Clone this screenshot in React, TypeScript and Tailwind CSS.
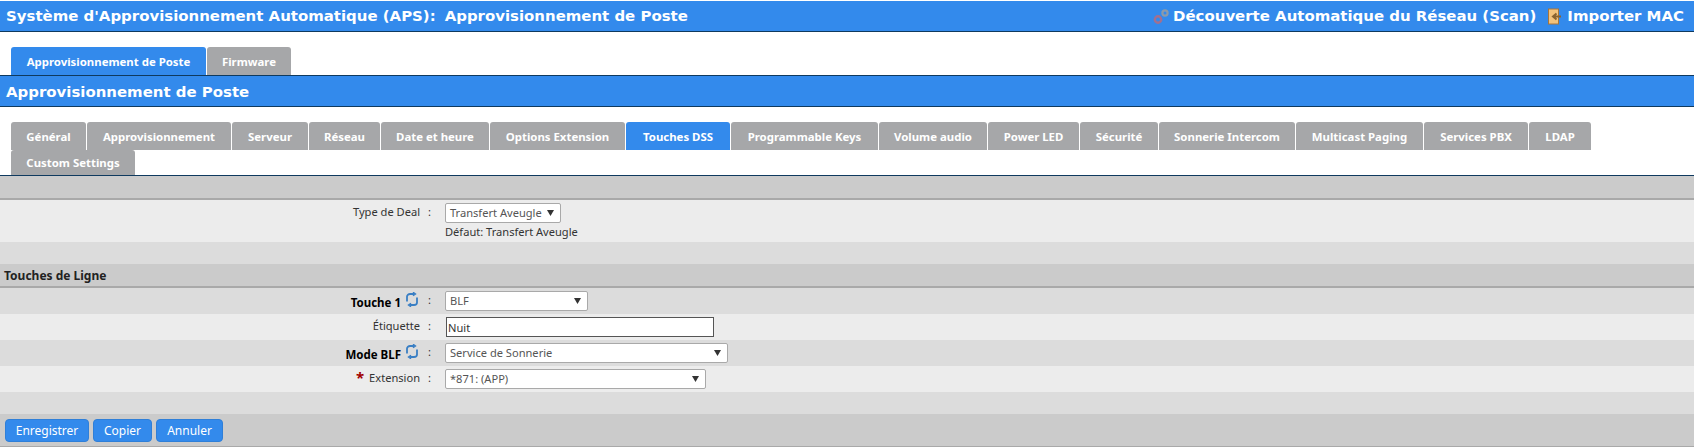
import React from 'react';

const mainTabs = [
  { label: 'Général', width: 'w-[75px]' },
  { label: 'Approvisionnement', width: 'w-[144px]' },
  { label: 'Serveur', width: 'w-[76px]' },
  { label: 'Réseau', width: 'w-[71px]' },
  { label: 'Date et heure', width: 'w-[108px]' },
  { label: 'Options Extension', width: 'w-[135px]' },
  { label: 'Touches DSS', width: 'w-[104px]', active: true },
  { label: 'Programmable Keys', width: 'w-[147px]' },
  { label: 'Volume audio', width: 'w-[108px]' },
  { label: 'Power LED', width: 'w-[91px]' },
  { label: 'Sécurité', width: 'w-[78px]' },
  { label: 'Sonnerie Intercom', width: 'w-[136px]' },
  { label: 'Multicast Paging', width: 'w-[127px]' },
  { label: 'Services PBX', width: 'w-[104px]' },
  { label: 'LDAP', width: 'w-[62px]' },
  { label: 'Custom Settings', width: 'w-[124px]' },
];

const Tab = ({ label, width, active, h }: { label: string; width: string; active?: boolean; h: string }) => (
  <div
    className={`${width} ${h} flex items-center justify-center pt-px rounded-t-[3px] text-[11.4px] font-bold text-white whitespace-nowrap ${
      active ? 'bg-[#338aec]' : 'bg-[#a6a7a9]'
    }`}
  >
    {label}
  </div>
);

const Gears = () => (
  <svg width="17" height="17" viewBox="0 0 17 17" className="shrink-0">
    <circle cx="5" cy="11.500" r="3.200" fill="none" stroke="#a2708f" strokeWidth="2.400" />
    <circle cx="12" cy="5" r="2.600" fill="none" stroke="#8d9aa8" strokeWidth="2.200" />
  </svg>
);

const ImportIcon = () => (
  <svg width="13" height="17" viewBox="0 0 13 17" className="shrink-0">
    <rect x="0.500" y="1" width="10" height="15" fill="#f2c27c" stroke="#a8753a" />
    <path d="M13 8.500H6M8.500 5.500l-3.500 3 3.500 3" fill="none" stroke="#8a6330" strokeWidth="2" />
  </svg>
);

const Refresh = () => (
  <svg width="12" height="15" viewBox="0 0 12 15" className="shrink-0" fill="none" stroke="#3a7fc4" strokeWidth="1.800">
    <path d="M1 9.500V4.500C1 3 2.500 2 4 2H8.500" />
    <path d="M11 5.500v5c0 1.500-1.500 2.500-3 2.500H3.500" />
    <path d="M7 0.200L9.500 2 7 3.800M5 11.200L2.500 13 5 14.800" strokeWidth="1.400" />
  </svg>
);

const Select = ({ value, width }: { value: string; width: string }) => (
  <div className={`${width} h-[20px] flex items-center justify-between bg-white border border-[#a9a9a9] rounded-[2px] pl-[4px] pr-[4px] text-[11.1px] text-[#555]`}>
    <span>{value}</span>
    <svg width="7" height="6" viewBox="0 0 7 6" className="mr-[2px]">
      <path d="M0 0h7L3.500 6z" fill="#333" />
    </svg>
  </div>
);

const Row = ({
  label,
  bold,
  refresh,
  required,
  bg,
  h,
  children,
}: {
  label: string;
  bold?: boolean;
  refresh?: boolean;
  required?: boolean;
  bg: string;
  h: string;
  children: React.ReactNode;
}) => (
  <div className={`${bg} ${h} flex items-center text-[11.1px] text-[#333]`}>
    <div className={`w-[420px] flex justify-end items-center gap-[5px] ${bold ? 'font-bold text-black text-[11.5px]' : '-mt-[2px]'}`}>
      {required && <span className="text-[#a00000] text-[15px] font-bold leading-none">*</span>}
      <span className={bold ? 'mt-[3px]' : ''}>{label}</span>
      {refresh && <span className="-mt-[4px] mr-[2px]"><Refresh /></span>}
    </div>
    <div className="w-[25px] pl-[8px] -mt-[2px]">:</div>
    {children}
  </div>
);

export default function App() {
  return (
    <div className="w-[1694px] h-[448px] overflow-hidden bg-white font-['Noto_Sans','DejaVu_Sans',sans-serif]">
      <div className="mt-px h-[31px] pt-px bg-[#338aec] border-b border-[#0f3a5f] flex items-center justify-between pl-[6px] pr-[10px] text-white font-bold text-[14.95px] font-['DejaVu_Sans',sans-serif]">
        <div className="flex gap-[9px]">
          <span>Système d'Approvisionnement Automatique (APS):</span>
          <span>Approvisionnement de Poste</span>
        </div>
        <div className="flex items-center">
          <Gears />
          <span className="ml-[3px]">Découverte Automatique du Réseau (Scan)</span>
          <span className="ml-[12px]"><ImportIcon /></span>
          <span className="ml-[6px]">Importer MAC</span>
        </div>
      </div>

      <div className="h-[43px] flex items-end pl-[11px] gap-px">
        <Tab label="Approvisionnement de Poste" width="w-[195px]" h="h-[28px]" active />
        <Tab label="Firmware" width="w-[84px]" h="h-[28px]" />
      </div>

      <div className="h-[32px] pt-[2px] bg-[#338aec] border-y border-[#0f3a5f] flex items-center pl-[6px] text-white font-bold text-[14.95px] font-['DejaVu_Sans',sans-serif]">
        Approvisionnement de Poste
      </div>

      <div className="h-[69px] pt-[15px] pl-[11px] border-b border-[#0f3a5f]">
        <div className="flex flex-wrap w-[1590px] gap-x-px">
          {mainTabs.map((t) => (
            <Tab key={t.label} label={t.label} width={t.width} active={t.active} h={t.label === 'Custom Settings' ? 'h-[25px]' : 'h-[28px]'} />
          ))}
        </div>
      </div>

      <div className="h-[24px] bg-[#cbcbcb] border-b-2 border-[#a9a9a9]" />

      <div className="h-[42px] bg-[#ececec] flex text-[11.1px] text-[#333]">
        <div className="w-[420px] pt-[4px] text-right">Type de Deal</div>
        <div className="w-[25px] pl-[8px] pt-[4px]">:</div>
        <div className="pt-[3px]">
          <Select value="Transfert Aveugle" width="w-[116px]" />
          <div className="leading-[17px]">Défaut: Transfert Aveugle</div>
        </div>
      </div>

      <div className="h-[22px] bg-[#dcdcdc]" />

      <div className="h-[24px] pt-[2px] bg-[#cbcbcb] border-b-2 border-[#a9a9a9] flex items-center pl-[4px] text-[12px] font-bold text-[#222]">
        Touches de Ligne
      </div>

      <Row label="Touche 1" bold refresh bg="bg-[#dcdcdc]" h="h-[26px]">
        <Select value="BLF" width="w-[143px]" />
      </Row>
      <Row label="Étiquette" bg="bg-[#ececec]" h="h-[26px]">
        <input
          readOnly
          value="Nuit"
          className="ml-px w-[268px] h-[20px] bg-white border border-[#555] px-px text-[11.1px] text-[#333] outline-none"
        />
      </Row>
      <Row label="Mode BLF" bold refresh bg="bg-[#dcdcdc]" h="h-[26px]">
        <Select value="Service de Sonnerie" width="w-[283px]" />
      </Row>
      <Row label="Extension" required bg="bg-[#ececec]" h="h-[26px]">
        <Select value="*871: (APP)" width="w-[261px]" />
      </Row>

      <div className="h-[22px] bg-[#dcdcdc]" />

      <div className="h-[33px] bg-[#cbcbcb] border-b border-[#a9a9a9] flex items-start pt-[5px] pl-[5px] gap-[4px]">
        {[
          { label: 'Enregistrer', width: 'w-[84px]' },
          { label: 'Copier', width: 'w-[59px]' },
          { label: 'Annuler', width: 'w-[67px]' },
        ].map((b) => (
          <button key={b.label} className={`${b.width} h-[23px] bg-[#338aec] border border-[#2f7fd8] rounded-[4px] text-white text-[12px]`}>
            {b.label}
          </button>
        ))}
      </div>
    </div>
  );
}
